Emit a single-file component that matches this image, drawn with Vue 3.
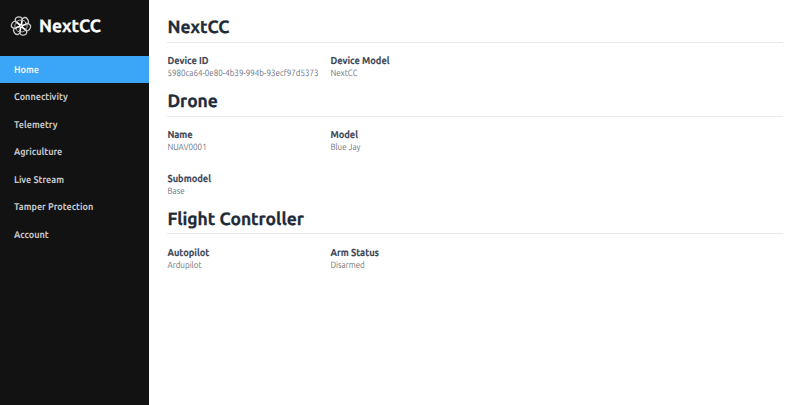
<script setup>
const items = ['Home', 'Connectivity', 'Telemetry', 'Agriculture', 'Live Stream', 'Tamper Protection', 'Account']
const petals = [-18, 42, 102, 162, 222, 282]
const sections = [
  { title: 'NextCC', fields: [['Device ID', '5980ca64-0e80-4b39-994b-93ecf97d5373'], ['Device Model', 'NextCC']] },
  { title: 'Drone', fields: [['Name', 'NUAV0001'], ['Model', 'Blue Jay'], ['Submodel', 'Base']] },
  { title: 'Flight Controller', fields: [['Autopilot', 'Ardupilot'], ['Arm Status', 'Disarmed']] },
]
</script>

<template>
  <div class="app">
    <aside class="sidebar">
      <header class="brand">
        <svg class="logo" viewBox="-11 -11 22 22" fill="none" stroke="#cfcfcf">
          <g v-for="a in petals" :key="a" :transform="`rotate(${a})`">
            <path d="M-3.4 -4.2 C-4.4 -7.4 -3.2 -9.8 -0.6 -9.6 C2.4 -9.3 4.6 -7 2.9 -4.8" stroke-width="1.3" />
            <path d="M-2.6 -5.4 C-0.8 -6.8 1.6 -6 2.6 -4.6" stroke-width="0.8" />
            <path d="M0 0 L2.7 -4.7" stroke="#fff" stroke-width="1.7" />
          </g>
          <circle r="2" fill="#fff" stroke="none" />
          <circle r="0.6" fill="#333" stroke="none" />
        </svg>
        <span class="name">NextCC</span>
      </header>
      <nav>
        <a v-for="(item, i) in items" :key="item" class="item" :class="{ active: i === 0 }"><span>{{ item }}</span></a>
      </nav>
    </aside>
    <main class="content">
      <section v-for="s in sections" :key="s.title">
        <h1><span>{{ s.title }}</span></h1>
        <dl class="grid">
          <div v-for="f in s.fields" :key="f[0]" class="field">
            <dt>{{ f[0] }}</dt>
            <dd>{{ f[1] }}</dd>
          </div>
        </dl>
      </section>
    </main>
  </div>
</template>

<style>
body { margin: 0; background: #fff; }
</style>

<style scoped>
.app { display: flex; height: 405px; overflow: hidden; font-family: Ubuntu, "Noto Sans", sans-serif; text-rendering: geometricPrecision; }
.sidebar { width: 149px; flex: none; background: #121212; }
.brand { height: 55.5px; box-sizing: border-box; padding: 0 0 3px 9.5px; display: flex; align-items: center; gap: 7.5px; }
.logo { width: 22px; height: 22px; margin-top: -1px; }
.name { color: #fff; font-size: 17.8px; font-weight: 700; line-height: 24px; transform: scaleX(0.98); transform-origin: left; -webkit-text-stroke: 0.3px #fff; }
.item { display: flex; align-items: center; height: 27.5px; padding-left: 13.7px; color: #c6c8cc; font-size: 9.9px; font-weight: 700; }
.item span { transform: scaleX(0.914); transform-origin: left; }
.item.active { background: #3ba5f8; color: #e9f4fe; }
.content { flex: 1; padding: 14px 17px 0 18px; }
h1 { margin: 0; height: 28.5px; box-sizing: border-box; border-bottom: 1px solid #e6e8eb; color: #212b38; font-size: 17.8px; font-weight: 700; line-height: 27px; }
h1 span { display: inline-block; transform: translateX(0.4px) scaleX(0.98); transform-origin: left; -webkit-text-stroke: 0.3px #212b38; }
.grid { margin: 0; padding: 12.5px 0 9px; display: grid; grid-template-columns: 151px 151px; column-gap: 12px; row-gap: 19.5px; }
.field { height: 24px; white-space: nowrap; }
dt { color: #3c4655; font-size: 10.1px; font-weight: 700; line-height: 12px; transform: translateX(0.4px) scaleX(0.92); transform-origin: left; -webkit-text-stroke: 0.15px #3c4655; }
dd { margin: 0; color: #6b7380; font-size: 9.1px; line-height: 13px; transform: translateX(0.4px) scaleX(0.884); transform-origin: left; }
</style>
